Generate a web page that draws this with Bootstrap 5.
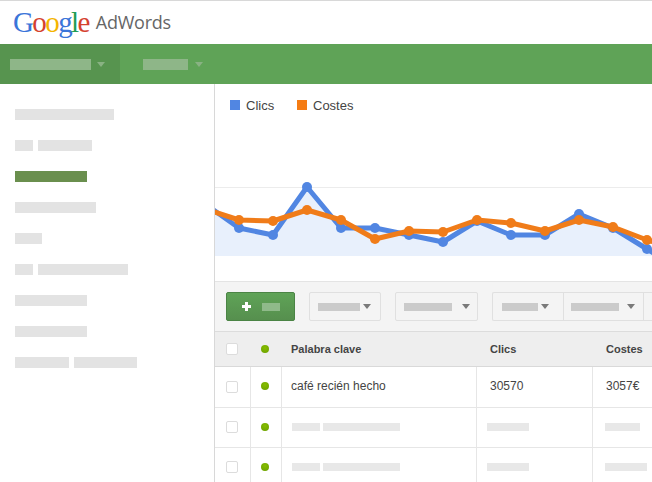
<!DOCTYPE html>
<html lang="es">
<head>
<meta charset="utf-8">
<title>Google AdWords</title>
<link rel="stylesheet" href="https://cdn.jsdelivr.net/npm/bootstrap@5.3.0/dist/css/bootstrap.min.css">
<style>
html,body{height:482px;overflow:hidden}
body{font-family:"Liberation Sans",Arial,sans-serif;color:#444;background:#fff;font-size:12px}
.top-head{height:44px;border-top:1px solid #d8d8d8;padding-left:13px;background:#fff}
.g-logo{font-family:"Liberation Serif",serif;font-size:29px;letter-spacing:-1.6px;line-height:1;font-weight:400}
.g-b{color:#3a75d9}.g-r{color:#d5412f}.g-y{color:#f4b400}.g-g{color:#1f9d55}
.ad-word{font-family:"Open Sans",sans-serif;font-size:18px;color:#666;margin-left:7px;line-height:1;letter-spacing:-.25px;padding-bottom:1px}
.green-bar{height:40px;background:#5fa357}
.green-tab{height:40px}
.tab-one{width:120px;background:#57944f;padding-left:10px}
.tab-two{padding-left:23px}
.bar-ph{height:11px;background:#8eb688;display:block}
.w-81{width:81px}.w-45{width:45px}
.tri{width:0;height:0;border-left:4px solid transparent;border-right:4px solid transparent;border-top:5px solid #7a7a7a;display:block;flex:none}
.tri-g{border-top-color:#89b283;margin-left:6px}
.tri-g2{margin-left:7px}
.page-body{height:398px}
.side{width:215px;flex:none;border-right:1px solid #d8d8d8;padding:25px 0 0 15px;height:398px;margin:0;gap:20px}
.side li{height:11px;gap:5px}
.sb{height:11px;background:#e3e3e3;display:block}
.sb-on{background:#6a8f4e}
.main-col{width:437px;overflow:hidden;flex:none}
.legend-row{height:46px;padding:14px 0 0 15px;font-size:13px;line-height:16px;color:#444}
.leg{gap:6px;width:67px}
.sw{width:10px;height:10px;display:block;position:relative;top:-1px}
.sw-b{background:#5186e2}.sw-o{background:#f57c14}
.chart-svg{display:block;width:437px;height:151px}
.tools{height:50px;background:#f4f4f4;border-top:1px solid #e4e4e4;padding:10px 0 0 11px;gap:14px;flex-wrap:nowrap}
.add-btn,.add-btn:hover{flex:none;width:69px;height:29px;padding:0 0 0 15px;background:#5b9c53;background-image:linear-gradient(#5fa357,#568f4e);border:1px solid #4b8445;border-radius:2px;gap:11px}
.plus{width:9px;height:9px;display:block}
.add-ph{width:18px;height:8px;background:#8fba8a;display:block}
.gray-btn,.gray-btn:hover{height:29px;background:#f4f4f4;border:1px solid #e0e0e0;border-radius:2px;padding:0 0 0 8px;flex:none}
.dd-a{width:72px;gap:3px}
.dd-b{width:83px;gap:10px}
.tool-group{flex:none;flex-wrap:nowrap}
.tool-group>.gray-btn{flex:none}
.dd-c{width:72px;gap:3px;padding-left:9px;border-radius:2px 0 0 2px;border-right:0}
.dd-d{width:81px;gap:8px;padding-left:7px;border-radius:0;border-right:0}
.dd-e{width:40px;border-radius:0;border-right:0}
.bph{height:8px;background:#cbcbcb;display:block}
.bw-42{width:42px}.bw-48{width:48px}.bw-36{width:36px}
.tbl-wrap{overflow:hidden;width:437px}
.kw-table{width:478px;table-layout:fixed;border-collapse:separate;border-spacing:0;margin:0;color:#444;font-size:12px}
.kw-table>*>tr>*{padding:0;border-bottom:1px solid #e6e6e6;border-right:1px solid #e6e6e6;vertical-align:middle;background:#fff;color:#444;box-shadow:none;height:40px}
.kw-table>thead>tr>th{background:#eee;border-right:0;border-top:1px solid #dcdcdc;border-bottom:1px solid #d9d9d9;height:36px;font-size:11px;font-weight:700}
.kw-table>tbody>tr>td{padding-bottom:2px}
.kw-table>tbody>tr.first-row>td{height:41px}
.kw-table>tbody>tr.first-row>td.c1{padding-bottom:0}
.c1{width:36px;padding-left:11px!important}
.c2{width:31px}
.c3{width:195px;padding-left:9px!important}
.c4{width:116px;padding-left:13px!important}
.c5{width:100px;padding-left:13px!important}
.ph3{padding-left:10px!important}.ph4{padding-left:10px!important}.ph5{padding-left:12px!important}
.chk{width:12px;height:12px;background:#fff;border:1px solid #dcdcdc;border-radius:2px;display:block}
.dot{width:8px;height:8px;border-radius:50%;background:radial-gradient(circle at 50% 35%,#86bd00,#6a9f00);display:block;margin:0 0 0 10px}
.cell-ph{gap:3px}
.tp{height:8px;background:#e8e8e8;display:block}
.tw-28{width:28px}.tw-77{width:77px}.tw-42{width:42px}.tw-35{width:35px}
</style>
</head>
<body>
<header class="top-head d-flex align-items-center">
  <span class="g-logo"><span class="g-b">G</span><span class="g-r">o</span><span class="g-y">o</span><span class="g-b">g</span><span class="g-g">l</span><span class="g-r">e</span></span>
  <span class="ad-word">AdWords</span>
</header>
<nav class="green-bar d-flex">
  <div class="green-tab tab-one d-flex align-items-center"><span class="bar-ph w-81"></span><span class="tri tri-g"></span></div>
  <div class="green-tab tab-two d-flex align-items-center"><span class="bar-ph w-45"></span><span class="tri tri-g tri-g2"></span></div>
</nav>
<div class="page-body d-flex">
  <ul class="side list-unstyled d-flex flex-column">
    <li class="d-flex"><span class="sb" style="width:99px"></span></li>
    <li class="d-flex"><span class="sb" style="width:18px"></span><span class="sb" style="width:54px"></span></li>
    <li class="d-flex"><span class="sb sb-on" style="width:72px"></span></li>
    <li class="d-flex"><span class="sb" style="width:81px"></span></li>
    <li class="d-flex"><span class="sb" style="width:27px"></span></li>
    <li class="d-flex"><span class="sb" style="width:18px"></span><span class="sb" style="width:90px"></span></li>
    <li class="d-flex"><span class="sb" style="width:72px"></span></li>
    <li class="d-flex"><span class="sb" style="width:72px"></span></li>
    <li class="d-flex"><span class="sb" style="width:54px"></span><span class="sb" style="width:63px"></span></li>
  </ul>
  <main class="main-col">
    <div class="legend-row d-flex">
      <div class="leg d-flex align-items-center align-self-start"><span class="sw sw-b"></span><span>Clics</span></div>
      <div class="leg d-flex align-items-center align-self-start"><span class="sw sw-o"></span><span>Costes</span></div>
    </div>
    <svg class="chart-svg" viewBox="215 130 437 151" aria-hidden="true">
      <line x1="215" y1="187.5" x2="652" y2="187.5" stroke="#ececec" stroke-width="1"/>
      <polygon fill="#e8f0fc" points="205,204 239,228 273,235 307,187 341,228 375,228 409,235 443,242 477,221 511,235 545,235 579,214 613,228 647,249 681,256 205,256"/>
      <polyline fill="none" stroke-width="5" stroke-linejoin="round" stroke="#5186e2" points="205,204 239,228 273,235 307,187 341,228 375,228 409,235 443,242 477,221 511,235 545,235 579,214 613,228 647,249 681,270"/>
      <g fill="#5186e2">
        <circle cx="239" cy="228" r="5"/><circle cx="273" cy="235" r="5"/><circle cx="307" cy="187" r="5"/><circle cx="341" cy="228" r="5"/><circle cx="375" cy="228" r="5"/><circle cx="409" cy="235" r="5"/><circle cx="443" cy="242" r="5"/><circle cx="477" cy="221" r="5"/><circle cx="511" cy="235" r="5"/><circle cx="545" cy="235" r="5"/><circle cx="579" cy="214" r="5"/><circle cx="613" cy="228" r="5"/><circle cx="647" cy="249" r="5"/>
      </g>
      <polyline fill="none" stroke="#f07c19" stroke-width="5" stroke-linejoin="round" points="205,209 239,220 273,221 307,210 341,220 375,239 409,231 443,232 477,220 511,223 545,231 579,220 613,227 647,240 681,250"/>
      <g fill="#f07c19">
        <circle cx="239" cy="220" r="5"/><circle cx="273" cy="221" r="5"/><circle cx="307" cy="210" r="5"/><circle cx="341" cy="220" r="5"/><circle cx="375" cy="239" r="5"/><circle cx="409" cy="231" r="5"/><circle cx="443" cy="232" r="5"/><circle cx="477" cy="220" r="5"/><circle cx="511" cy="223" r="5"/><circle cx="545" cy="231" r="5"/><circle cx="579" cy="220" r="5"/><circle cx="613" cy="227" r="5"/><circle cx="647" cy="240" r="5"/>
      </g>
    </svg>
    <div class="tools d-flex">
      <button type="button" class="btn add-btn d-flex align-items-center" aria-label="Añadir">
        <svg class="plus" viewBox="0 0 9 9"><path d="M3 0h3v3h3v3H6v3H3V6H0V3h3z" fill="#fff"/></svg>
        <span class="add-ph"></span>
      </button>
      <button type="button" class="btn gray-btn dd-a d-flex align-items-center"><span class="bph bw-42"></span><span class="tri"></span></button>
      <button type="button" class="btn gray-btn dd-b d-flex align-items-center"><span class="bph bw-48"></span><span class="tri"></span></button>
      <div class="btn-group tool-group">
        <button type="button" class="btn gray-btn dd-c d-flex align-items-center"><span class="bph bw-36"></span><span class="tri"></span></button>
        <button type="button" class="btn gray-btn dd-d d-flex align-items-center"><span class="bph bw-48"></span><span class="tri"></span></button>
        <button type="button" class="btn gray-btn dd-e d-flex align-items-center"></button>
      </div>
    </div>
    <div class="tbl-wrap">
      <table class="table kw-table">
        <thead>
          <tr>
            <th class="c1"><span class="chk"></span></th>
            <th class="c2"><span class="dot"></span></th>
            <th class="c3">Palabra clave</th>
            <th class="c4">Clics</th>
            <th class="c5">Costes</th>
          </tr>
        </thead>
        <tbody>
          <tr class="first-row">
            <td class="c1"><span class="chk"></span></td>
            <td class="c2"><span class="dot"></span></td>
            <td class="c3">café recién hecho</td>
            <td class="c4">30570</td>
            <td class="c5">3057€</td>
          </tr>
          <tr>
            <td class="c1"><span class="chk"></span></td>
            <td class="c2"><span class="dot"></span></td>
            <td class="c3 ph3"><div class="cell-ph d-flex"><span class="tp tw-28"></span><span class="tp tw-77"></span></div></td>
            <td class="c4 ph4"><span class="tp tw-42"></span></td>
            <td class="c5 ph5"><span class="tp tw-35"></span></td>
          </tr>
          <tr>
            <td class="c1"><span class="chk"></span></td>
            <td class="c2"><span class="dot"></span></td>
            <td class="c3 ph3"><div class="cell-ph d-flex"><span class="tp tw-28"></span><span class="tp tw-77"></span></div></td>
            <td class="c4 ph4"><span class="tp tw-42"></span></td>
            <td class="c5 ph5"><span class="tp tw-42"></span></td>
          </tr>
        </tbody>
      </table>
    </div>
  </main>
</div>
</body>
</html>
